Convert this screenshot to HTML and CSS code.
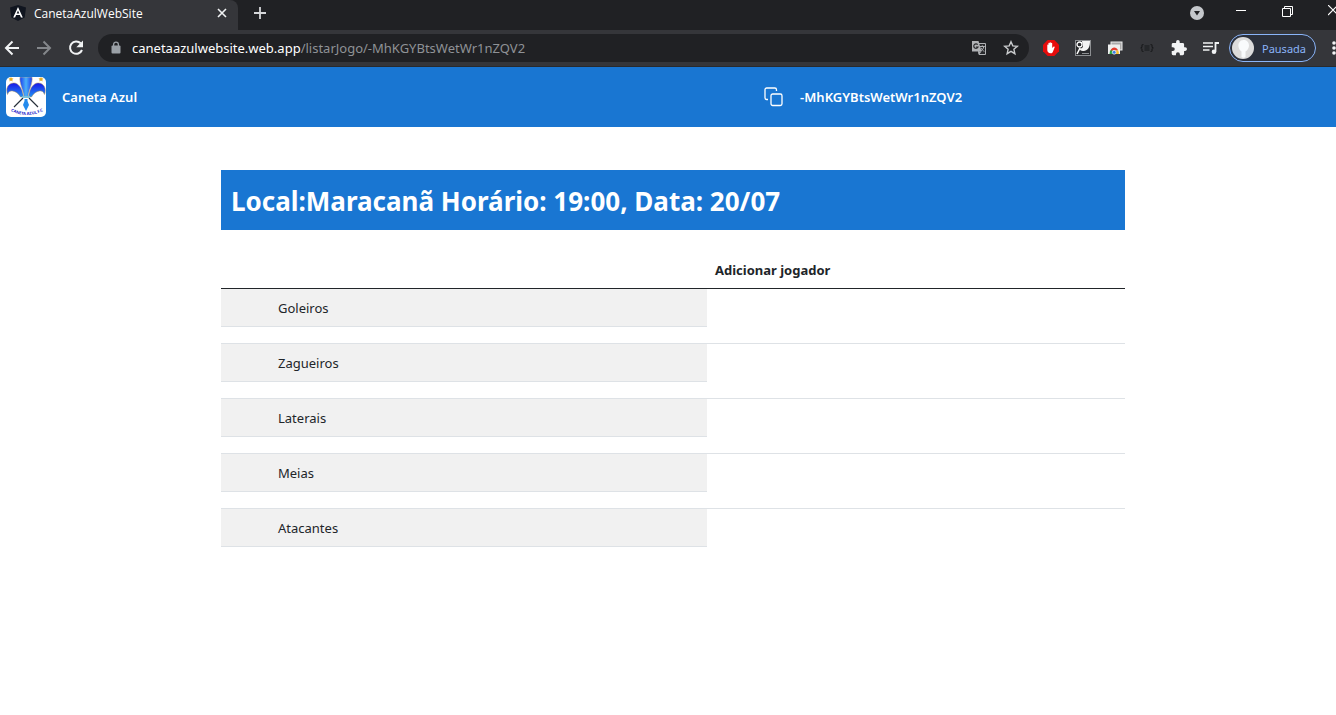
FILE: index.html
```html
<!DOCTYPE html>
<html lang="pt-BR">
<head>
<meta charset="utf-8">
<title>CanetaAzulWebSite</title>
<link rel="stylesheet" href="styles.css">
</head>
<body>
<header class="browser">
  <div class="tabstrip">
    <div class="tab">
      <svg class="favicon" width="16" height="16" viewBox="0 0 16 16"><path fill="#10151f" d="M8 0l8 2.500-1.300 10L8 16l-6.700-3.500L0 2.500z"/><path fill="#fff" d="M8 2L3.200 12.500h1.900l1-2.500h3.800l1 2.500h1.900zM8 5.500l1.300 3.100H6.700z"/></svg>
      <span class="tab-title">CanetaAzulWebSite</span>
      <button class="icon-btn" aria-label="Fechar guia"><svg width="10" height="10" viewBox="0 0 10 10"><path d="M1 1l8 8M9 1l-8 8" stroke="#f1f3f4" stroke-width="1.600"/></svg></button>
    </div>
    <button class="icon-btn new-tab" aria-label="Nova guia"><svg width="12" height="12" viewBox="0 0 12 12"><path d="M6 0v12M0 6h12" stroke="#d5d7da" stroke-width="1.800"/></svg></button>
    <div class="window-controls">
      <button class="icon-btn search-tabs" aria-label="Pesquisar guias"><svg width="14" height="14" viewBox="0 0 14 14"><circle cx="7" cy="7" r="7" fill="#c4c7cb"/><path d="M4 5h6L7 9.500z" fill="#202124"/></svg></button>
      <button class="icon-btn minimize" aria-label="Minimizar"><svg width="10" height="12" viewBox="0 0 10 12"><path d="M0 5.500h10" stroke="#fff"/></svg></button>
      <button class="icon-btn restore" aria-label="Restaurar"><svg width="11" height="11" viewBox="0 0 11 11"><path d="M.5 2.500h8v8h-8zM2.500 2.500v-2h8v8h-2" fill="none" stroke="#fff"/></svg></button>
      <button class="icon-btn close-window" aria-label="Fechar"><svg width="8" height="12" viewBox="0 0 8 12"><path d="M0 0l10 10M10 0L0 10" stroke="#fff" stroke-width="1.200"/></svg></button>
    </div>
  </div>
  <div class="toolbar">
    <div class="nav-buttons">
      <button class="icon-btn" aria-label="Voltar"><svg width="16" height="16" viewBox="0 0 16 16"><path d="M15 8H2.500M8.500 1.500L2 8l6.500 6.500" fill="none" stroke="#f1f3f4" stroke-width="2"/></svg></button>
      <button class="icon-btn" aria-label="Avançar"><svg width="16" height="16" viewBox="0 0 16 16"><path d="M1 8h12.500M7.500 1.500L14 8l-6.500 6.500" fill="none" stroke="#84878b" stroke-width="2"/></svg></button>
      <button class="icon-btn" aria-label="Recarregar"><svg width="16" height="16" viewBox="0 0 16 16"><path d="M12.700 3.300A6.200 6.200 0 1 0 14 10" fill="none" stroke="#f1f3f4" stroke-width="2"/><path d="M15 .5v6.700H8.300z" fill="#f1f3f4"/></svg></button>
    </div>
    <div class="address">
      <svg width="10" height="14" viewBox="0 0 10 14"><rect x="0.500" y="4.500" width="9" height="8" rx="1" fill="#9aa0a6"/><path d="M2.600 5V3.500a2.400 2.400 0 0 1 4.800 0V5" fill="none" stroke="#9aa0a6" stroke-width="1.300"/></svg>
      <div class="url" role="textbox" aria-label="Barra de endereço"><span class="url-host">canetaazulwebsite.web.app</span>/listarJogo/-MhKGYBtsWetWr1nZQV2</div>
      <button class="icon-btn" aria-label="Traduzir"><svg width="16" height="16" viewBox="0 0 16 16"><path d="M7 3.500h7.500v11H8z" fill="#292a2d" stroke="#b0b2b5"/><path d="M1 1h6.500l3 10.500H1z" fill="#b0b2b5"/><path d="M6.700 4.700A2.200 2.200 0 1 0 7 7H4.900" fill="none" stroke="#292a2d" stroke-width="1.200"/><path d="M8.800 6.500h5M11.300 5.300v1.200M12.800 6.500c-.4 2.300-1.500 3.500-3 4.500M10 7.800c.7 1.700 1.800 2.700 3.300 3.600" fill="none" stroke="#b0b2b5"/><path d="M8 14.500l2.500-3H7z" fill="#b0b2b5"/></svg></button>
      <button class="icon-btn" aria-label="Favoritos"><svg width="16" height="16" viewBox="0 0 16 16"><path d="M8 1.800l1.800 4.100 4.500.4-3.400 3 1 4.400L8 11.400l-3.900 2.300 1-4.400-3.400-3 4.500-.4z" fill="none" stroke="#c9cbcd" stroke-width="1.400"/></svg></button>
    </div>
    <div class="extensions">
      <button class="icon-btn" aria-label="Bloqueador"><svg width="16" height="16" viewBox="0 0 16 16"><path d="M4.700 0h6.600L16 4.700v6.600L11.300 16H4.700L0 11.300V4.700z" fill="#e60c0c"/><path d="M4.300 8V5.200c0-.9 1.100-.9 1.100 0V3.400c0-.9 1.200-.9 1.200 0V2.800c0-.9 1.300-.9 1.300 0v.6c0-.9 1.300-.9 1.300 0V8l1.200-1.300c.7-.6 1.600 0 1.200.8L9.800 12c-.4.900-1 1.300-2 1.300-2.400 0-3.500-1.400-3.500-3.300z" fill="#fff"/></svg></button>
      <button class="icon-btn" aria-label="Extensão de imagem"><svg width="16" height="16" viewBox="0 0 16 16"><rect x=".5" y=".5" width="15" height="15" fill="#292a2d" stroke="#8d8f92"/><path d="M7 1h8c0 5-1 9-6 10-3 .5-4-1-5-3 2 1 4 0 4-2 0-3-1-3-1-5z" fill="#f3f3f3"/><circle cx="4.500" cy="4.500" r="2.500" fill="#292a2d" stroke="#fff" stroke-width="1.300"/><path d="M2 14l3-6" stroke="#fff" stroke-width="1.500"/><path d="M7 13.500h7" stroke="#8d8f92"/></svg></button>
      <button class="icon-btn" aria-label="Capturas"><svg width="16" height="16" viewBox="0 0 16 16"><rect x="4" y="2" width="11" height="8" fill="#aaa" stroke="#eee"/><rect x="1" y="4.500" width="12" height="9.500" fill="#eee"/><path d="M2.500 14a4.700 4.700 0 0 1 2-4.700L7 12v2z" fill="#28a745"/><path d="M3.500 10.500c1.500-4 6-4 7.700 0z" fill="#e23b2e"/><path d="M9 10.500h2.200A5 5 0 0 1 11.800 14H8z" fill="#f6c026"/><circle cx="7.200" cy="12.300" r="1.900" fill="#3b7de0" stroke="#fff" stroke-width=".7"/></svg></button>
      <button class="icon-btn" aria-label="JSON"><svg width="16" height="16" viewBox="0 0 16 16"><path d="M4.500 4.500c-2 0-1.500 1-1.500 2s-.5 1.500-1.500 1.500C2.500 8 3 8.500 3 9.500s-.5 2 1.500 2M11.500 4.500c2 0 1.500 1 1.500 2s.5 1.500 1.500 1.500c-1 0-1.500.5-1.500 1.500s.5 2-1.500 2M5.500 6h5M5.500 8h5M5.500 10h5" fill="none" stroke="#17181a" stroke-width="1.100"/></svg></button>
      <button class="icon-btn" aria-label="Extensões"><svg width="16" height="16" viewBox="1 1 22 22"><path fill="#f1f3f4" d="M20.500 11H19V7a2 2 0 0 0-2-2h-4V3.500a2.500 2.500 0 0 0-5 0V5H4a2 2 0 0 0-2 2v3.800h1.500a2.700 2.700 0 0 1 0 5.400H2V20a2 2 0 0 0 2 2h3.800v-1.500a2.700 2.700 0 0 1 5.400 0V22H17a2 2 0 0 0 2-2v-4h1.500a2.500 2.500 0 0 0 0-5z"/></svg></button>
      <button class="icon-btn" aria-label="Mídia"><svg width="16" height="16" viewBox="0 0 16 16"><path d="M0 3h10M0 6.500h10M0 10h6.500" stroke="#f1f3f4" stroke-width="1.600"/><path d="M12.500 11.500V3H16" fill="none" stroke="#f1f3f4" stroke-width="1.800"/><circle cx="11" cy="11.700" r="2.300" fill="#f1f3f4"/></svg></button>
    </div>
    <button class="profile"><svg width="22" height="22" viewBox="0 0 22 22"><circle cx="11" cy="11" r="11" fill="#dcdcdc"/><path d="M11.500 3C8 3 6 6 6.500 9.500c.3 2.300 1.300 4 3 5V20c1 1 3 1 4 0v-5.500c2-1 3.500-3.500 3.500-6C17 5 14.500 3 11.500 3z" fill="#f9fbfc"/></svg>Pausada</button>
    <button class="icon-btn menu" aria-label="Menu"><svg width="4" height="14" viewBox="0 0 4 14"><circle cx="2" cy="2" r="1.800" fill="#f1f3f4"/><circle cx="2" cy="7" r="1.800" fill="#f1f3f4"/><circle cx="2" cy="12" r="1.800" fill="#f1f3f4"/></svg></button>
  </div>
</header>

<nav class="navbar">
  <svg class="logo" width="40" height="40" viewBox="0 0 40 40" role="img" aria-label="Caneta Azul">
    <defs>
      <linearGradient id="petal" x1="0" y1="0" x2="0" y2="1"><stop offset="0" stop-color="#1717e8"/><stop offset="1" stop-color="#2492f2"/></linearGradient>
      <linearGradient id="center" x1="0" y1="0" x2="1" y2="0"><stop offset="0" stop-color="#1a3df0"/><stop offset=".5" stop-color="#4ab0f8"/><stop offset="1" stop-color="#1a3df0"/></linearGradient>
      <path id="arc" d="M5 34Q20 42 37 34"/>
    </defs>
    <rect width="40" height="40" rx="5" fill="#fff"/>
    <path d="M8 30L17 21M32 30l-9-9" stroke="#28303a" stroke-width="1.200"/>
    <path d="M17.500 20C16.500 11 12 5.500 7.500 6 1.500 6.500-.5 12 1.500 17.500c1-3 3-4 5-3.500C10 14.500 12.500 16.500 14.500 20z" fill="url(#petal)" stroke="#a98e5c" stroke-width=".5"/>
    <path d="M22.500 20C23.500 11 28 5.500 32.500 6c6 .5 8 6 6 11.500-1-3-3-4-5-3.500-3.500.5-6 2.500-8 6z" fill="url(#petal)" stroke="#a98e5c" stroke-width=".5"/>
    <path d="M14 0h12c1 6-3 12-4 20h-4c-1-8-5-14-4-20z" fill="url(#center)" stroke="#c9b283" stroke-width=".6"/>
    <path d="M16 19h8v2h-8z" fill="#7cc0d8"/>
    <path d="M18.500 22h3v2l1.500 4-3 6-3-6 1.500-4z" fill="#248bed"/>
    <path d="M5 0l.8 1.300 1.700.2-1.200 1.200.3 1.700L5 3.600l-1.600.8.300-1.700L2.500 1.500l1.700-.2zM35 0l.8 1.300 1.700.2-1.200 1.200.3 1.700-1.600-.8-1.600.8.300-1.700-1.200-1.200 1.700-.2z" fill="#e6ad23"/>
    <text class="logo-text"><textPath href="#arc" startOffset="50%">CANETA AZUL F.C</textPath></text>
  </svg>
  <a class="brand" href="#">Caneta Azul</a>
  <button class="copy"><svg width="20" height="20" viewBox="0 0 20 20"><path d="M4 12.500H2.500A1.700 1.700 0 0 1 1 10.800V2.700A1.700 1.700 0 0 1 2.700 1h8.100a1.700 1.700 0 0 1 1.700 1.700V4" fill="none" stroke="#fff" stroke-width="1.300"/><rect x="7" y="7" width="11" height="11.500" rx="1.700" fill="none" stroke="#fff" stroke-width="1.300"/></svg><span>-MhKGYBtsWetWr1nZQV2</span></button>
</nav>

<main class="page">
  <div class="content">
    <h1 class="game">Local:Maracanã Horário: 19:00, Data: 20/07</h1>
    <table class="players">
      <thead><tr><th class="position-col"></th><th>Adicionar jogador</th></tr></thead>
      <tbody>
        <tr><td><div class="position">Goleiros</div></td><td></td></tr>
        <tr><td><div class="position">Zagueiros</div></td><td></td></tr>
        <tr><td><div class="position">Laterais</div></td><td></td></tr>
        <tr><td><div class="position">Meias</div></td><td></td></tr>
        <tr><td><div class="position">Atacantes</div></td><td></td></tr>
      </tbody>
    </table>
  </div>
</main>
</body>
</html>
```
FILE: styles.css
```css
* { box-sizing: border-box; }
body { margin: 0; background: #fff; color: #212529; font-family: "Segoe UI", "Noto Sans", "Open Sans", sans-serif; font-size: 13px; }
svg { display: block; flex: none; }
button { font: inherit; color: inherit; cursor: pointer; }
.icon-btn { padding: 0; border: 0; background: none; flex: none; }

.browser { background: #35363a; border-bottom: 1px solid #292a2d; color: #fff; overflow: hidden; }
.tabstrip { display: flex; align-items: center; height: 30px; background: #202124; }
.tab { display: flex; align-items: center; gap: 8px; width: 238px; height: 30px; padding: 0 11px 4px 10px; background: #35363a; border-radius: 0 8px 0 0; }
.tab-title { flex: 1; font-family: "Segoe UI", "Open Sans", sans-serif; font-size: 12px; }
.new-tab { margin: 0 0 4px 16px; }
.window-controls { display: flex; align-items: center; margin-left: auto; padding-bottom: 8px; }
.search-tabs { margin-top: 4px; }
.minimize { margin-left: 32px; }
.restore { margin-left: 36px; }
.close-window { margin-left: 35px; }

.toolbar { display: flex; align-items: center; height: 36px; }
.nav-buttons { display: flex; gap: 16px; padding: 0 14px 0 4px; }
.address { display: flex; align-items: center; flex: 1; gap: 16px; height: 28px; padding: 0 10px 0 13px; border-radius: 14px; background: #202124; }
.url { flex: 1; margin-left: -5px; color: #8f9296; white-space: nowrap; }
.url-host { color: #fff; }
.extensions { display: flex; gap: 16px; padding: 0 10px 0 14px; }
.profile { display: flex; align-items: center; justify-content: space-between; width: 87px; height: 28px; padding: 0 9px 0 2px; border: 1px solid #8ab4f8; border-radius: 14px; background: #2b303b; color: #8ab4f8; font-size: 11px; }
.menu { margin-left: 16px; }

.navbar { display: flex; align-items: center; height: 60px; padding-left: 6px; background: #1976d2; color: #fff; font-weight: 600; }
.logo-text { fill: #2020c8; font-size: 4px; font-weight: 700; text-anchor: middle; }
.brand { margin-left: 16px; color: #fff; text-decoration: none; }
.copy { display: flex; align-items: center; gap: 16px; width: 43%; margin-left: auto; padding: 0; border: 0; background: none; font-weight: 600; }

.page { padding: 43px 0 43px 10px; }
.content { max-width: 904px; margin: 0 auto; }
.game { margin: 0; padding: 13px 10px 11px; background: #1976d2; color: #fff; font-size: 26px; line-height: 36px; font-weight: 700; }
.players { width: 100%; margin-top: 21px; border-collapse: separate; border-spacing: 0; line-height: 21px; }
.players th { height: 38px; padding: 9px 8px 7px; border-bottom: 1px solid #212529; text-align: left; }
.players .position-col { width: 486px; }
.players td { padding: 0 0 16px; border-bottom: 1px solid #dee2e6; }
.players tbody tr:last-child td { border-bottom: 0; }
.position { padding: 9px 8px 7px 57px; border-bottom: 1px solid #dee2e6; background: #f1f1f1; }
```
